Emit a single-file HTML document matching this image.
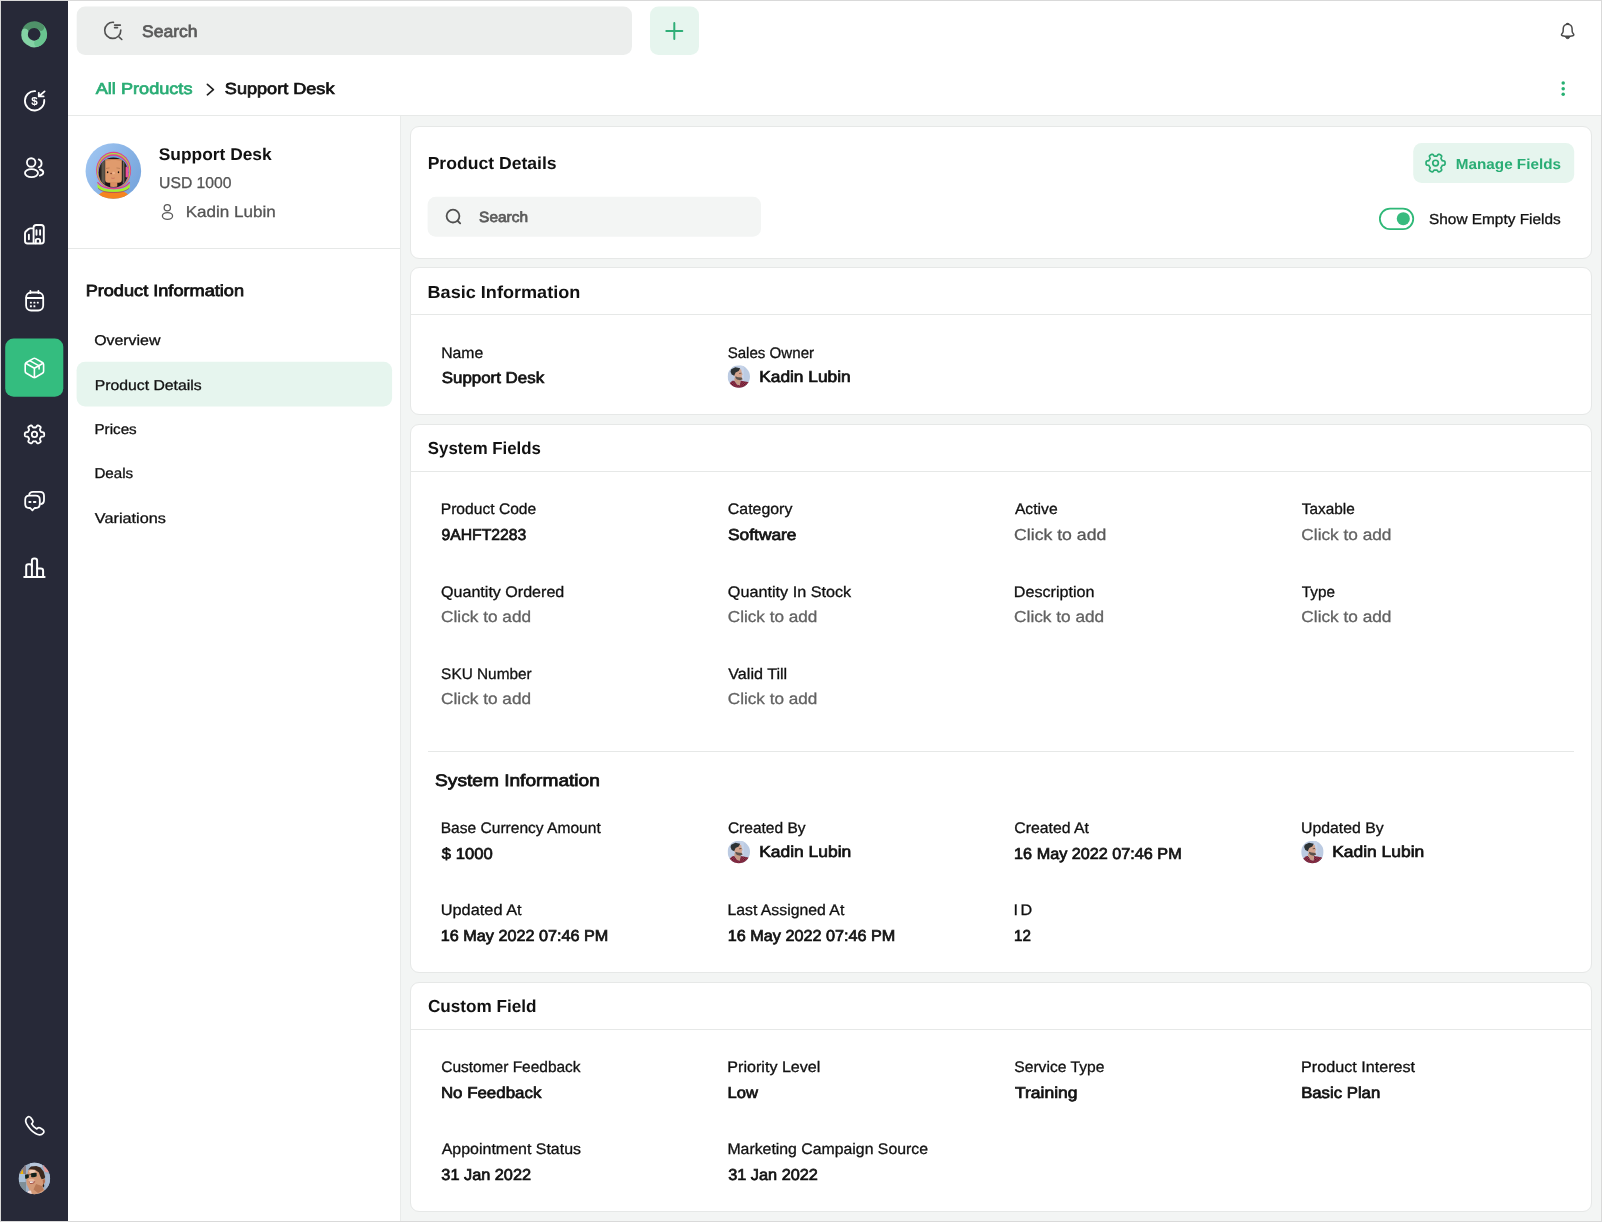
<!DOCTYPE html>
<html lang="en">
<head>
<meta charset="utf-8">
<title>Support Desk - Product Details</title>
<style>
*{box-sizing:border-box;margin:0;padding:0}
html,body{width:1602px;height:1222px;overflow:hidden;background:#fff}
body{position:relative;font-family:"Liberation Sans",Arial,sans-serif;color:#111}
#frame{position:absolute;left:0;top:0;width:1602px;height:1222px;border:1px solid #d9d9d9;z-index:50;pointer-events:none}
#side{position:absolute;left:1px;top:1px;width:67px;height:1220px;background:#272938}
#hdr{position:absolute;left:68px;top:1px;width:1533px;height:115px;background:#fff;border-bottom:1px solid #e7e9e8}
#left{position:absolute;left:68px;top:116px;width:333px;height:1105px;background:#fff;border-right:1px solid #e9ebea}
#ldiv{position:absolute;left:68px;top:248px;width:332px;height:1px;background:#e6e8e7}
#main{position:absolute;left:401px;top:116px;width:1200px;height:1105px;background:#f3f5f4}
.card{position:absolute;left:410px;width:1182px;background:#fff;border:1px solid #e6e8e7;border-radius:9px}
.hl{position:absolute;height:1px;background:#e6e8e7}
#txt,#ico{position:absolute;left:0;top:0;width:1602px;height:1222px;will-change:transform}
.t{position:absolute;left:0;top:0;white-space:nowrap;line-height:1;transform-origin:0 0;text-rendering:geometricPrecision}
svg{position:absolute;overflow:visible}
</style>
</head>
<body>
<div id="side"></div>
<div id="hdr"></div>
<div id="left"></div>
<div id="ldiv"></div>
<div id="main"></div>
<div class="card" style="top:126px;height:133px"></div>
<div class="card" style="top:267px;height:148px"></div>
<div class="hl" style="left:411px;top:314px;width:1180px"></div>
<div class="card" style="top:424px;height:549px"></div>
<div class="hl" style="left:411px;top:471px;width:1180px"></div>
<div class="hl" style="left:428px;top:751px;width:1146px"></div>
<div class="card" style="top:982px;height:230px"></div>
<div class="hl" style="left:411px;top:1029px;width:1180px"></div>
<svg style="left:0;top:0" width="1602" height="1222" viewBox="0 0 1602 1222">
<rect x="5.2" y="338.6" width="58.1" height="58.1" rx="8.5" fill="#34bd7f"/>
<rect x="76.7" y="6.6" width="555.3" height="48.5" rx="8.5" fill="#eceeed"/>
<rect x="650" y="6.6" width="49" height="48.5" rx="8.5" fill="#e6f5ee"/>
<rect x="76.6" y="361.8" width="315.5" height="44.7" rx="8.5" fill="#e6f5ee"/>
<rect x="427.6" y="196.8" width="333.4" height="39.9" rx="8" fill="#f3f5f4"/>
<rect x="1413.2" y="143" width="161" height="40" rx="8.5" fill="#e6f5ee"/>
</svg>
<div id="ico"><svg style="left:0;top:0" width="1602" height="1222" viewBox="0 0 1602 1222" fill="none" stroke-linecap="round" stroke-linejoin="round">
<g stroke-width="6.6" stroke-linecap="round">
<path d="M40.87,27.39 A9.6,9.6 0 0 1 41.55,40.47" stroke="#69c590"/>
<path d="M24.97,31.65 A9.6,9.6 0 0 1 40.87,27.39" stroke="#4f9269"/>
<path d="M39.00,42.61 A9.6,9.6 0 0 1 24.89,31.98" stroke="#84d3a5"/>
<path d="M43.22,37.58 A9.6,9.6 0 0 1 37.48,43.32" stroke="#69c590"/>
</g>
<g stroke="#fff" stroke-width="1.8">
<path d="M35.11,91.11 A9.7,9.7 0 1 0 44.26,99.95"/>
<path d="M44.6,91.4 L38.9,96.3 M38.8,92.8 L38.8,96.4 L43.6,96.4"/>
</g>
<text x="34.4" y="105.4" font-family="Liberation Sans, Arial, sans-serif" font-weight="700" font-size="11.6" fill="#fff" text-anchor="middle">$</text>
<g stroke="#fff" stroke-width="1.8">
<circle cx="31.2" cy="162.5" r="4.25"/>
<ellipse cx="31.5" cy="173.1" rx="6.55" ry="4"/>
<path d="M38.70,159.41 A4.2,4.2 0 0 1 38.70,167.39"/>
<path d="M39.9,169.5 C42,170 43.3,171.2 43.3,172.6 C43.3,174 42,175.2 39.9,175.7"/>
</g>
<g stroke="#fff" stroke-width="1.9">
<path d="M33.6,243.5 L33.6,227.6 Q33.6,225 36.2,225 L41.2,225 Q43.8,225 43.8,227.6 L43.8,241 Q43.8,243.5 41.2,243.5 L27.6,243.5 Q25,243.5 25,241 L25,233.6 Q25,232.2 26,231.3 L28.6,229 Q29.4,228.4 30.4,228.4 L33.6,228.4"/>
<path d="M28.9,234.6 L28.9,239.3 M36.5,230.2 L36.5,234.8 M40.1,230.2 L40.1,234.8"/>
<path d="M35.8,243.3 L35.8,240.6 Q35.8,238.9 37.5,238.9 L38.4,238.9 Q40.1,238.9 40.1,240.6 L40.1,243.3"/>
</g>
<g stroke="#fff" stroke-width="1.8">
<rect x="26.1" y="292.5" width="17.1" height="18" rx="5"/>
<path d="M26.3,298 L43,298 M30.4,291 L30.4,293 M38.4,291 L38.4,293"/>
</g>
<g fill="#fff" stroke="none">
<rect x="29.95" y="301.65" width="1.9" height="1.9" rx="0.5"/>
<rect x="33.45" y="301.65" width="1.9" height="1.9" rx="0.5"/>
<rect x="36.85" y="301.65" width="1.9" height="1.9" rx="0.5"/>
<rect x="29.95" y="305.25" width="1.9" height="1.9" rx="0.5"/>
<rect x="33.45" y="305.25" width="1.9" height="1.9" rx="0.5"/>
</g>
<g stroke="#fff" stroke-width="1.6">
<path d="M33.2,358.6 Q34.4,357.9 35.6,358.6 L42.4,362.5 Q43.6,363.2 43.6,364.6 L43.6,371.2 Q43.6,372.6 42.4,373.3 L35.6,377.2 Q34.4,377.9 33.2,377.2 L26.4,373.3 Q25.2,372.6 25.2,371.2 L25.2,364.6 Q25.2,363.2 26.4,362.5 Z"/>
<path d="M25.7,363.3 L34.4,368.2 L43.1,363.3 M34.4,368.2 L34.4,377.5 M29.7,360.6 L39.1,365.9 L39.1,368.9"/>
</g>
<g stroke="#fff" stroke-width="1.8">
<path d="M44.20,434.40 L44.20,434.65 L44.18,434.91 L44.16,435.16 L44.13,435.41 L44.08,435.66 L44.01,435.91 L43.87,436.14 L43.62,436.34 L43.17,436.48 L42.52,436.55 L41.87,436.58 L41.42,436.65 L41.16,436.76 L41.01,436.90 L40.91,437.05 L40.82,437.21 L40.73,437.37 L40.65,437.53 L40.56,437.69 L40.48,437.85 L40.38,438.01 L40.29,438.16 L40.19,438.31 L40.09,438.46 L40.00,438.62 L39.92,438.79 L39.87,438.99 L39.91,439.27 L40.07,439.69 L40.37,440.27 L40.64,440.87 L40.74,441.33 L40.69,441.65 L40.56,441.88 L40.38,442.07 L40.19,442.24 L39.99,442.39 L39.78,442.53 L39.57,442.67 L39.35,442.80 L39.13,442.92 L38.90,443.04 L38.67,443.15 L38.44,443.25 L38.20,443.33 L37.95,443.39 L37.68,443.39 L37.38,443.27 L37.03,442.95 L36.65,442.42 L36.29,441.87 L36.01,441.52 L35.79,441.35 L35.59,441.29 L35.40,441.27 L35.22,441.28 L35.04,441.29 L34.86,441.29 L34.68,441.30 L34.50,441.30 L34.32,441.30 L34.14,441.29 L33.96,441.29 L33.78,441.28 L33.60,441.27 L33.41,441.29 L33.21,441.35 L32.99,441.52 L32.71,441.87 L32.35,442.42 L31.97,442.95 L31.62,443.27 L31.32,443.39 L31.05,443.39 L30.80,443.33 L30.56,443.25 L30.33,443.15 L30.10,443.04 L29.87,442.92 L29.65,442.80 L29.43,442.67 L29.22,442.53 L29.01,442.39 L28.81,442.24 L28.62,442.07 L28.44,441.88 L28.31,441.65 L28.26,441.33 L28.36,440.87 L28.63,440.27 L28.93,439.69 L29.09,439.27 L29.13,438.99 L29.08,438.79 L29.00,438.62 L28.91,438.46 L28.81,438.31 L28.71,438.16 L28.62,438.01 L28.52,437.85 L28.44,437.69 L28.35,437.53 L28.27,437.37 L28.18,437.21 L28.09,437.05 L27.99,436.90 L27.84,436.76 L27.58,436.65 L27.13,436.58 L26.48,436.55 L25.83,436.48 L25.38,436.34 L25.13,436.14 L24.99,435.91 L24.92,435.66 L24.87,435.41 L24.84,435.16 L24.82,434.91 L24.80,434.65 L24.80,434.40 L24.80,434.15 L24.82,433.89 L24.84,433.64 L24.87,433.39 L24.92,433.14 L24.99,432.89 L25.13,432.66 L25.38,432.46 L25.83,432.32 L26.48,432.25 L27.13,432.22 L27.58,432.15 L27.84,432.04 L27.99,431.90 L28.09,431.75 L28.18,431.59 L28.27,431.43 L28.35,431.27 L28.44,431.11 L28.52,430.95 L28.62,430.79 L28.71,430.64 L28.81,430.49 L28.91,430.34 L29.00,430.18 L29.08,430.01 L29.13,429.81 L29.09,429.53 L28.93,429.11 L28.63,428.53 L28.36,427.93 L28.26,427.47 L28.31,427.15 L28.44,426.92 L28.62,426.73 L28.81,426.56 L29.01,426.41 L29.22,426.27 L29.43,426.13 L29.65,426.00 L29.87,425.88 L30.10,425.76 L30.33,425.65 L30.56,425.55 L30.80,425.47 L31.05,425.41 L31.32,425.41 L31.62,425.53 L31.97,425.85 L32.35,426.38 L32.71,426.93 L32.99,427.28 L33.21,427.45 L33.41,427.51 L33.60,427.53 L33.78,427.52 L33.96,427.51 L34.14,427.51 L34.32,427.50 L34.50,427.50 L34.68,427.50 L34.86,427.51 L35.04,427.51 L35.22,427.52 L35.40,427.53 L35.59,427.51 L35.79,427.45 L36.01,427.28 L36.29,426.93 L36.65,426.38 L37.03,425.85 L37.38,425.53 L37.68,425.41 L37.95,425.41 L38.20,425.47 L38.44,425.55 L38.67,425.65 L38.90,425.76 L39.13,425.88 L39.35,426.00 L39.57,426.13 L39.78,426.27 L39.99,426.41 L40.19,426.56 L40.38,426.73 L40.56,426.92 L40.69,427.15 L40.74,427.47 L40.64,427.93 L40.37,428.53 L40.07,429.11 L39.91,429.53 L39.87,429.81 L39.92,430.01 L40.00,430.18 L40.09,430.34 L40.19,430.49 L40.29,430.64 L40.38,430.79 L40.48,430.95 L40.56,431.11 L40.65,431.27 L40.73,431.43 L40.82,431.59 L40.91,431.75 L41.01,431.90 L41.16,432.04 L41.42,432.15 L41.87,432.22 L42.52,432.25 L43.17,432.32 L43.62,432.46 L43.87,432.66 L44.01,432.89 L44.08,433.14 L44.13,433.39 L44.16,433.64 L44.18,433.89 L44.20,434.15Z"/>
<circle cx="34.5" cy="434.4" r="2.7"/>
</g>
<g stroke="#fff" stroke-width="1.8">
<path d="M29.2,494.6 Q29.6,491.8 33,491.8 L40,491.8 Q44,491.8 44,495.8 L44,500.2 Q44,503.6 41,504.1"/>
<path d="M29.2,495.7 L35.8,495.7 Q39.8,495.7 39.8,499.7 L39.8,504 Q39.8,508 35.8,508 L34.6,508 L32.4,510.3 L30.2,508 L29.2,508 Q25.2,508 25.2,504 L25.2,499.7 Q25.2,495.7 29.2,495.7 Z"/>
<path d="M29.3,501.9 L30.5,501.9 M33.9,501.9 L35.4,501.9" stroke-width="2"/>
</g>
<g stroke="#fff" stroke-width="2">
<path d="M24.2,577 L44.6,577"/>
<path d="M26.2,576.5 L26.2,566.4 Q26.2,564.2 28.4,564.2 L29.7,564.2 Q31.9,564.2 31.9,566.4"/>
<path d="M31.9,576.5 L31.9,560.8 Q31.9,558.5 34.2,558.5 L34.8,558.5 Q37.1,558.5 37.1,560.8 L37.1,576.5"/>
<path d="M37.1,568.5 L40.9,568.5 Q43.1,568.5 43.1,570.7 L43.1,576.5"/>
</g>
<g stroke="#fff" stroke-width="1.7">
<path d="M27.6,1117.2 C28.6,1116.4 30,1116.6 30.8,1117.7 L32.6,1120.3 C33.2,1121.2 33.1,1122.3 32.4,1123 L31.6,1123.8 C32.8,1126 34.6,1127.8 36.8,1129 L37.6,1128.2 C38.3,1127.5 39.4,1127.4 40.3,1128 L42.9,1129.8 C44,1130.6 44.2,1132 43.4,1133 C41.6,1135.2 38.6,1135.4 35.6,1133.6 C31.6,1131.2 28.4,1127.4 26.4,1123.6 C25.2,1121.2 25.6,1118.8 27.6,1117.2 Z"/>
</g>
<defs><clipPath id="cpu"><circle cx="34.4" cy="1178.5" r="15.7"/></clipPath></defs>
<g clip-path="url(#cpu)" stroke="none"><g>
<rect x="17" y="1161" width="35" height="35" fill="#9db0c6"/>
<rect x="17" y="1161" width="9" height="14" fill="#8b7f86"/>
<rect x="19" y="1174" width="6" height="8" fill="#a9c0d6"/>
<rect x="18" y="1182" width="8" height="12" fill="#7f8f98"/>
<rect x="30" y="1161" width="12" height="6" fill="#b9c8dc"/>
<path d="M42.6,1165 L48.6,1166.5 L49.5,1172.5 L45,1172 Z" fill="#e89a98"/>
<rect x="45.5" y="1174" width="5" height="16" fill="#a8b8d0"/>
<path d="M20.2,1174 L22.6,1169.3 L23.3,1174 Z" fill="#f2b600"/>
<path d="M28.4,1170 L31,1168.6 L35,1169.4 L38.9,1172 L40.2,1176 L41.5,1179 L44.4,1178.2 L45.4,1181 L43.6,1185 L42.5,1186.6 L44.6,1190.6 L40,1195 L30.5,1195 L29,1189 L26.6,1184.2 L26.3,1180 L27,1175 Z" fill="#d49a78"/>
<ellipse cx="32.4" cy="1171.4" rx="3.2" ry="1.6" fill="#f0cdb8"/>
<ellipse cx="31.5" cy="1180.4" rx="3" ry="1.6" fill="#eab79c"/>
<path d="M36,1184 L42,1186 L43.5,1190 L38,1193 L33.5,1189.5 Z" fill="#b97a58"/>
<path d="M42.6,1180 L44.6,1179 L45,1182 L43.2,1184.6 Z" fill="#b06a4c"/>
<path d="M28.1,1169.6 L31,1166.6 L36.3,1166 L40.4,1167.6 L43.6,1171.6 L45.2,1177 L44.4,1178.6 L41.6,1179.2 L40.2,1176.3 L38.9,1172.4 L35,1169.8 L31,1169.2 Z" fill="#3b281e"/>
<path d="M43.4,1183.6 L44.4,1186 L43.2,1187.6 L42.6,1186 Z" fill="#2c1d16"/>
<path d="M25,1175.2 Q26.8,1173.8 28.8,1174.6 L28.9,1177.6 Q27,1179.4 25.2,1178.4 Z" fill="#17241d"/>
<path d="M31,1173.6 Q33.8,1172.2 36.6,1173 L36.7,1176.2 Q34,1178 31.2,1177 Z" fill="#15221c"/>
<path d="M28.8,1175 L31,1174.4" stroke="#2a2a2a" stroke-width="0.6"/>
<path d="M28.6,1181.4 Q32,1180.6 35.4,1181.6 Q33.6,1184.6 30.2,1184 Z" fill="#a8554a"/>
<path d="M29.4,1181.5 Q32,1181 34.2,1181.7 Q32.6,1183.2 30,1182.9 Z" fill="#f4efec"/>
<path d="M28,1191 L31,1190.6 L32,1195 L27,1195 Z" fill="#f1dcdc"/>
</g></g>
<g stroke="#505050" stroke-width="1.6">
<path d="M113.45,22.33 A8.05,8.05 0 1 0 120.80,30.07"/>
<path d="M119.2,37.2 L121.8,39.5 M114.6,25.15 L120.3,25.15 M114.6,27.65 L117.5,27.65"/>
</g>
<path d="M666.3,31 L682.3,31 M674.3,23 L674.3,39" stroke="#2fae77" stroke-width="2"/>
<g stroke="#4a4a4a" stroke-width="1.5">
<path d="M1567.64,24.2 C1564.9,24.2 1563.2,26.3 1563.2,28.8 C1563.2,30.5 1563.4,31.6 1562.6,32.8 L1561.7,34.2 C1561.2,35 1561.6,35.5 1562.4,35.7 C1565.8,36.5 1569.5,36.5 1572.9,35.7 C1573.7,35.5 1574.1,35 1573.6,34.2 L1572.7,32.8 C1571.9,31.6 1572.1,30.5 1572.1,28.8 C1572.1,26.3 1570.4,24.2 1567.64,24.2 Z"/>
<path d="M1566.5,23.7 Q1567.64,22.9 1568.8,23.7" stroke-width="1.3"/>
<path d="M1565.4,36.9 C1565.9,38.2 1566.7,38.7 1567.64,38.7 C1568.6,38.7 1569.4,38.2 1569.9,36.9 Z" fill="#4a4a4a" stroke-width="0.8"/>
</g>
<circle cx="1563.2" cy="83.1" r="1.75" fill="#27b072" stroke="none"/>
<circle cx="1563.2" cy="88.7" r="1.75" fill="#27b072" stroke="none"/>
<circle cx="1563.2" cy="94.3" r="1.75" fill="#27b072" stroke="none"/>
<path d="M207.4,84.4 L213.4,89.6 L207.4,94.8" stroke="#222" stroke-width="1.7"/>
<defs><clipPath id="cpa"><circle cx="113.35" cy="170.95" r="27.8"/></clipPath><linearGradient id="gb" x1="0" y1="0" x2="1" y2="0.6"><stop offset="0" stop-color="#a3c8f3"/><stop offset="1" stop-color="#78a6dd"/></linearGradient><clipPath id="cph"><ellipse cx="113.4" cy="172.4" rx="15.2" ry="14.6"/></clipPath></defs>
<g clip-path="url(#cpa)" stroke="none">
<rect x="85" y="143" width="57" height="57" fill="url(#gb)"/>
<path d="M96.5,200 C98,193 103,190 113.5,190 C124,190 129,193 130.5,200 Z" fill="#f5841f"/>
<ellipse cx="113.6" cy="170.6" rx="17.5" ry="18.9" fill="#e0428c"/>
<ellipse cx="113.6" cy="170.9" rx="16.7" ry="18" fill="#a8e63c"/>
<ellipse cx="113.6" cy="171.3" rx="15.9" ry="17.1" fill="#e53c8e"/>
<ellipse cx="113.5" cy="171.8" rx="15.2" ry="16.1" fill="#6d9fd6"/>
<ellipse cx="113.4" cy="172.5" rx="14.7" ry="15.1" fill="#1c1413"/>
<g clip-path="url(#cph)">
<rect x="100.2" y="160" width="5.4" height="26" fill="#2e2925"/>
<rect x="101.8" y="161" width="0.7" height="24" fill="#8d8573"/>
<rect x="103.6" y="160" width="0.7" height="25" fill="#a39a86"/>
<rect x="121.4" y="160" width="4.2" height="26" fill="#2e2925"/>
<rect x="123.4" y="161" width="0.8" height="24" fill="#9a917e"/>
<rect x="125.6" y="166.5" width="2.4" height="11" rx="1.2" fill="#f0509a"/>
<path d="M105.2,159 L121.8,159 L121.8,179.6 Q121.8,182.8 118.6,182.8 L108.4,182.8 Q105.2,182.8 105.2,179.6 Z" fill="#e09b6d"/>
<rect x="110.2" y="182" width="7.1" height="5" fill="#d88f62"/>
<path d="M105.2,159 L121.8,159 L121.8,161 C117,159.6 110,159.6 105.2,161 Z" fill="#c98255"/>
</g>
<ellipse cx="107.6" cy="172.3" rx="0.75" ry="1.05" fill="#120c0b"/><ellipse cx="118.5" cy="172.3" rx="0.75" ry="1.05" fill="#120c0b"/>
<path d="M106.4,168.4 L109.2,168 M116.9,168 L119.7,168.4" stroke="#9a6442" stroke-width="0.5"/>
<ellipse cx="111.1" cy="173.5" rx="1" ry="0.7" fill="#8a4a32"/>
<ellipse cx="113.6" cy="173" rx="1.4" ry="1.2" fill="#eeb08a"/>
<path d="M111.6,178.2 Q113,178.9 114.4,178.2" stroke="#c96a5a" stroke-width="0.7" fill="none"/>
<path d="M97.6,183.5 C101,188.6 107,189.6 113.5,189.6 C120,189.6 126,188.6 129.6,183.5 L129.8,187.4 C126,191.6 120,192 113.5,192 C107,192 101,191.6 97.4,187.4 Z" fill="#a6f02e"/>
<path d="M97.8,182.6 C101,187.4 107,188.4 113.5,188.4 C120,188.4 126,187.4 129.4,182.6" stroke="#e23c8e" stroke-width="1.2" fill="none"/>
<path d="M98.4,188.6 C102,191.8 107,192.4 113.5,192.4 C120,192.4 125,191.8 128.8,188.6" stroke="#8a2c86" stroke-width="0.6" fill="none"/>
</g>
<g stroke="#5a5a5a" stroke-width="1.3">
<circle cx="167.3" cy="207.8" r="3.15"/>
<ellipse cx="167.5" cy="216" rx="5.1" ry="3.35"/>
</g>
<g stroke="#505050" stroke-width="1.8">
<circle cx="453" cy="216.1" r="6.4"/><path d="M457.8,221 L460.2,223.4"/>
</g>
<rect x="1379.85" y="208.6" width="33.4" height="20.4" rx="10.2" fill="#fff" stroke="#2eb877" stroke-width="1.75"/>
<circle cx="1403.3" cy="218.7" r="6.55" fill="#37bb7e" stroke="none"/>
<g stroke="#2aad75" stroke-width="1.7">
<path d="M1445.06,163.06 L1445.06,163.31 L1445.04,163.56 L1445.03,163.80 L1444.99,164.05 L1444.95,164.30 L1444.88,164.54 L1444.75,164.76 L1444.53,164.97 L1444.12,165.11 L1443.53,165.20 L1442.94,165.25 L1442.54,165.33 L1442.30,165.45 L1442.16,165.59 L1442.05,165.75 L1441.97,165.91 L1441.88,166.08 L1441.80,166.24 L1441.71,166.40 L1441.62,166.56 L1441.53,166.72 L1441.43,166.87 L1441.33,167.03 L1441.23,167.18 L1441.14,167.34 L1441.05,167.51 L1441.00,167.70 L1441.01,167.97 L1441.15,168.36 L1441.39,168.89 L1441.62,169.44 L1441.69,169.87 L1441.63,170.17 L1441.50,170.39 L1441.33,170.57 L1441.14,170.73 L1440.94,170.88 L1440.73,171.03 L1440.52,171.16 L1440.31,171.29 L1440.09,171.41 L1439.87,171.52 L1439.65,171.63 L1439.42,171.73 L1439.18,171.81 L1438.94,171.87 L1438.68,171.88 L1438.39,171.78 L1438.06,171.50 L1437.70,171.03 L1437.36,170.55 L1437.08,170.23 L1436.86,170.09 L1436.67,170.04 L1436.48,170.03 L1436.29,170.03 L1436.11,170.04 L1435.93,170.05 L1435.74,170.06 L1435.56,170.06 L1435.38,170.06 L1435.19,170.05 L1435.01,170.04 L1434.83,170.03 L1434.64,170.03 L1434.45,170.04 L1434.26,170.09 L1434.04,170.23 L1433.76,170.55 L1433.42,171.03 L1433.06,171.50 L1432.73,171.78 L1432.44,171.88 L1432.18,171.87 L1431.94,171.81 L1431.70,171.73 L1431.47,171.63 L1431.25,171.52 L1431.03,171.41 L1430.81,171.29 L1430.60,171.16 L1430.39,171.03 L1430.18,170.88 L1429.98,170.73 L1429.79,170.57 L1429.62,170.39 L1429.49,170.17 L1429.43,169.87 L1429.50,169.44 L1429.73,168.89 L1429.97,168.36 L1430.11,167.97 L1430.12,167.70 L1430.07,167.51 L1429.98,167.34 L1429.89,167.18 L1429.79,167.03 L1429.69,166.87 L1429.59,166.72 L1429.50,166.56 L1429.41,166.40 L1429.32,166.24 L1429.24,166.08 L1429.15,165.91 L1429.07,165.75 L1428.96,165.59 L1428.82,165.45 L1428.58,165.33 L1428.18,165.25 L1427.59,165.20 L1427.00,165.11 L1426.59,164.97 L1426.37,164.76 L1426.24,164.54 L1426.17,164.30 L1426.13,164.05 L1426.09,163.80 L1426.08,163.56 L1426.06,163.31 L1426.06,163.06 L1426.06,162.81 L1426.08,162.56 L1426.09,162.32 L1426.13,162.07 L1426.17,161.82 L1426.24,161.58 L1426.37,161.36 L1426.59,161.15 L1427.00,161.01 L1427.59,160.92 L1428.18,160.87 L1428.58,160.79 L1428.82,160.67 L1428.96,160.53 L1429.07,160.37 L1429.15,160.21 L1429.24,160.04 L1429.32,159.88 L1429.41,159.72 L1429.50,159.56 L1429.59,159.40 L1429.69,159.25 L1429.79,159.09 L1429.89,158.94 L1429.98,158.78 L1430.07,158.61 L1430.12,158.42 L1430.11,158.15 L1429.97,157.76 L1429.73,157.23 L1429.50,156.68 L1429.43,156.25 L1429.49,155.95 L1429.62,155.73 L1429.79,155.55 L1429.98,155.39 L1430.18,155.24 L1430.39,155.09 L1430.60,154.96 L1430.81,154.83 L1431.03,154.71 L1431.25,154.60 L1431.47,154.49 L1431.70,154.39 L1431.94,154.31 L1432.18,154.25 L1432.44,154.24 L1432.73,154.34 L1433.06,154.62 L1433.42,155.09 L1433.76,155.57 L1434.04,155.89 L1434.26,156.03 L1434.45,156.08 L1434.64,156.09 L1434.83,156.09 L1435.01,156.08 L1435.19,156.07 L1435.38,156.06 L1435.56,156.06 L1435.74,156.06 L1435.93,156.07 L1436.11,156.08 L1436.29,156.09 L1436.48,156.09 L1436.67,156.08 L1436.86,156.03 L1437.08,155.89 L1437.36,155.57 L1437.70,155.09 L1438.06,154.62 L1438.39,154.34 L1438.68,154.24 L1438.94,154.25 L1439.18,154.31 L1439.42,154.39 L1439.65,154.49 L1439.87,154.60 L1440.09,154.71 L1440.31,154.83 L1440.52,154.96 L1440.73,155.09 L1440.94,155.24 L1441.14,155.39 L1441.33,155.55 L1441.50,155.73 L1441.63,155.95 L1441.69,156.25 L1441.62,156.68 L1441.39,157.23 L1441.15,157.76 L1441.01,158.15 L1441.00,158.42 L1441.05,158.61 L1441.14,158.78 L1441.23,158.94 L1441.33,159.09 L1441.43,159.25 L1441.53,159.40 L1441.62,159.56 L1441.71,159.72 L1441.80,159.88 L1441.88,160.04 L1441.97,160.21 L1442.05,160.37 L1442.16,160.53 L1442.30,160.67 L1442.54,160.79 L1442.94,160.87 L1443.53,160.92 L1444.12,161.01 L1444.53,161.15 L1444.75,161.36 L1444.88,161.58 L1444.95,161.82 L1444.99,162.07 L1445.03,162.32 L1445.04,162.56 L1445.06,162.81Z"/>
<circle cx="1435.56" cy="163.06" r="2.8"/>
</g>
<defs><pattern id="plaid" width="2.4" height="2.4" patternUnits="userSpaceOnUse"><rect width="2.4" height="2.4" fill="#c9303d"/><rect width="1.2" height="1.2" fill="#2b2340"/><rect x="1.2" y="1.2" width="1.2" height="1.2" fill="#3a2446"/></pattern></defs>
<defs><clipPath id="cs1"><circle cx="738.8" cy="376.55" r="11.2"/></clipPath></defs>
<g clip-path="url(#cs1)" stroke="none">
<rect x="727.5999999999999" y="365.35" width="22.4" height="22.4" fill="#bccbe2"/>
<rect x="739.8" y="365.35" width="4" height="22.4" fill="#c6d3e8"/>
<path d="M729.30,383.55 L732.30,380.85 L734.40,380.65 L737.30,384.55 L739.80,385.15 L740.50,380.55 L743.80,381.15 L749.30,382.35 L749.30,388.55 L728.80,388.55Z" fill="url(#plaid)"/>
<path d="M734.60,377.55 L740.30,379.55 L740.50,380.55 L739.80,385.15 L737.30,384.55 L734.40,380.65Z" fill="#c79a85"/>
<path d="M738.50,368.95 L741.20,369.45 L741.70,372.55 L742.70,374.45 L741.70,375.35 L741.80,376.75 L742.60,379.15 L740.10,380.15 L735.90,377.95 L733.90,375.55 L735.40,372.35Z" fill="#d3a58f"/>
<path d="M735.50,376.35 L737.80,377.15 L741.50,377.45 L742.60,379.15 L740.10,380.25 L737.00,379.45 L735.40,377.75Z" fill="#5a514c"/>
<path d="M739.00,372.95 L741.40,372.65 L741.40,373.45 L739.20,373.75Z" fill="#5c4a44"/>
<path d="M731.20,369.35 L735.40,367.25 L740.20,368.25 L738.70,370.95 L735.60,372.55 L734.20,375.75 L731.70,374.45 L730.50,371.65Z" fill="#2d3335"/>
</g>
<defs><clipPath id="cs2"><circle cx="738.8" cy="852.0" r="11.2"/></clipPath></defs>
<g clip-path="url(#cs2)" stroke="none">
<rect x="727.5999999999999" y="840.8" width="22.4" height="22.4" fill="#bccbe2"/>
<rect x="739.8" y="840.8" width="4" height="22.4" fill="#c6d3e8"/>
<path d="M729.30,859.00 L732.30,856.30 L734.40,856.10 L737.30,860.00 L739.80,860.60 L740.50,856.00 L743.80,856.60 L749.30,857.80 L749.30,864.00 L728.80,864.00Z" fill="url(#plaid)"/>
<path d="M734.60,853.00 L740.30,855.00 L740.50,856.00 L739.80,860.60 L737.30,860.00 L734.40,856.10Z" fill="#c79a85"/>
<path d="M738.50,844.40 L741.20,844.90 L741.70,848.00 L742.70,849.90 L741.70,850.80 L741.80,852.20 L742.60,854.60 L740.10,855.60 L735.90,853.40 L733.90,851.00 L735.40,847.80Z" fill="#d3a58f"/>
<path d="M735.50,851.80 L737.80,852.60 L741.50,852.90 L742.60,854.60 L740.10,855.70 L737.00,854.90 L735.40,853.20Z" fill="#5a514c"/>
<path d="M739.00,848.40 L741.40,848.10 L741.40,848.90 L739.20,849.20Z" fill="#5c4a44"/>
<path d="M731.20,844.80 L735.40,842.70 L740.20,843.70 L738.70,846.40 L735.60,848.00 L734.20,851.20 L731.70,849.90 L730.50,847.10Z" fill="#2d3335"/>
</g>
<defs><clipPath id="cs3"><circle cx="1312.4" cy="852" r="11.2"/></clipPath></defs>
<g clip-path="url(#cs3)" stroke="none">
<rect x="1301.2" y="840.8" width="22.4" height="22.4" fill="#bccbe2"/>
<rect x="1313.4" y="840.8" width="4" height="22.4" fill="#c6d3e8"/>
<path d="M1302.90,859.00 L1305.90,856.30 L1308.00,856.10 L1310.90,860.00 L1313.40,860.60 L1314.10,856.00 L1317.40,856.60 L1322.90,857.80 L1322.90,864.00 L1302.40,864.00Z" fill="url(#plaid)"/>
<path d="M1308.20,853.00 L1313.90,855.00 L1314.10,856.00 L1313.40,860.60 L1310.90,860.00 L1308.00,856.10Z" fill="#c79a85"/>
<path d="M1312.10,844.40 L1314.80,844.90 L1315.30,848.00 L1316.30,849.90 L1315.30,850.80 L1315.40,852.20 L1316.20,854.60 L1313.70,855.60 L1309.50,853.40 L1307.50,851.00 L1309.00,847.80Z" fill="#d3a58f"/>
<path d="M1309.10,851.80 L1311.40,852.60 L1315.10,852.90 L1316.20,854.60 L1313.70,855.70 L1310.60,854.90 L1309.00,853.20Z" fill="#5a514c"/>
<path d="M1312.60,848.40 L1315.00,848.10 L1315.00,848.90 L1312.80,849.20Z" fill="#5c4a44"/>
<path d="M1304.80,844.80 L1309.00,842.70 L1313.80,843.70 L1312.30,846.40 L1309.20,848.00 L1307.80,851.20 L1305.30,849.90 L1304.10,847.10Z" fill="#2d3335"/>
</g>
</svg></div>
<div id="txt"><span class="t" style="font-size:16.8px;color:#5a5a5a;font-weight:400;-webkit-text-stroke:0.7px;transform:translate(141.99px,24px) scaleX(1.0449)">Search</span>
<span class="t" style="font-size:16.0px;color:#2aad75;font-weight:400;-webkit-text-stroke:0.7px;transform:translate(95.72px,82px) scaleX(1.1333)">All Products</span>
<span class="t" style="font-size:16.0px;color:#111;font-weight:400;-webkit-text-stroke:0.7px;transform:translate(224.85px,82px) scaleX(1.1303)">Support Desk</span>
<span class="t" style="font-size:17.0px;color:#111;font-weight:700;transform:translate(158.75px,146px) scaleX(1.0220)">Support Desk</span>
<span class="t" style="font-size:15.6px;color:#555;font-weight:400;-webkit-text-stroke:0.3px;transform:translate(159.05px,176px) scaleX(1.0082)">USD 1000</span>
<span class="t" style="font-size:15.6px;color:#555;font-weight:400;-webkit-text-stroke:0.3px;transform:translate(185.67px,205px) scaleX(1.0933)">Kadin Lubin</span>
<span class="t" style="font-size:16.0px;color:#111;font-weight:400;-webkit-text-stroke:0.75px;transform:translate(85.64px,284px) scaleX(1.1340)">Product Information</span>
<span class="t" style="font-size:14.2px;color:#111;font-weight:400;-webkit-text-stroke:0.3px;transform:translate(94.16px,334px) scaleX(1.1208)">Overview</span>
<span class="t" style="font-size:14.2px;color:#111;font-weight:400;-webkit-text-stroke:0.3px;transform:translate(94.68px,379px) scaleX(1.1116)">Product Details</span>
<span class="t" style="font-size:14.2px;color:#111;font-weight:400;-webkit-text-stroke:0.3px;transform:translate(94.44px,423px) scaleX(1.0717)">Prices</span>
<span class="t" style="font-size:14.2px;color:#111;font-weight:400;-webkit-text-stroke:0.3px;transform:translate(94.45px,467px) scaleX(1.0662)">Deals</span>
<span class="t" style="font-size:14.2px;color:#111;font-weight:400;-webkit-text-stroke:0.3px;transform:translate(94.86px,512px) scaleX(1.1435)">Variations</span>
<span class="t" style="font-size:17.4px;color:#111;font-weight:700;transform:translate(427.63px,155px) scaleX(1.0113)">Product Details</span>
<span class="t" style="font-size:14.8px;color:#5a5a5a;font-weight:400;-webkit-text-stroke:0.7px;transform:translate(479.10px,211px) scaleX(1.0427)">Search</span>
<span class="t" style="font-size:14.6px;color:#2aad75;font-weight:700;transform:translate(1455.78px,158px) scaleX(1.0463)">Manage Fields</span>
<span class="t" style="font-size:14.5px;color:#111;font-weight:400;-webkit-text-stroke:0.3px;transform:translate(1429.00px,213px) scaleX(1.0616)">Show Empty Fields</span>
<span class="t" style="font-size:17.4px;color:#111;font-weight:700;transform:translate(427.56px,284px) scaleX(1.0397)">Basic Information</span>
<span class="t" style="font-size:15.3px;color:#111;font-weight:400;-webkit-text-stroke:0.3px;transform:translate(441.15px,346px) scaleX(1.0315)">Name</span>
<span class="t" style="font-size:15.8px;color:#111;font-weight:400;-webkit-text-stroke:0.7px;transform:translate(441.80px,371px) scaleX(1.0687)">Support Desk</span>
<span class="t" style="font-size:15.3px;color:#111;font-weight:400;-webkit-text-stroke:0.3px;transform:translate(727.63px,346px) scaleX(0.9870)">Sales Owner</span>
<span class="t" style="font-size:15.8px;color:#111;font-weight:400;-webkit-text-stroke:0.7px;transform:translate(759.19px,370px) scaleX(1.0969)">Kadin Lubin</span>
<span class="t" style="font-size:17.4px;color:#111;font-weight:700;transform:translate(427.83px,440px) scaleX(0.9664)">System Fields</span>
<span class="t" style="font-size:15.3px;color:#111;font-weight:400;-webkit-text-stroke:0.3px;transform:translate(440.73px,502px) scaleX(1.0212)">Product Code</span>
<span class="t" style="font-size:15.3px;color:#111;font-weight:400;-webkit-text-stroke:0.3px;transform:translate(727.85px,502px) scaleX(1.0394)">Category</span>
<span class="t" style="font-size:15.3px;color:#111;font-weight:400;-webkit-text-stroke:0.3px;transform:translate(1014.89px,502px) scaleX(1.0257)">Active</span>
<span class="t" style="font-size:15.3px;color:#111;font-weight:400;-webkit-text-stroke:0.3px;transform:translate(1301.79px,502px) scaleX(1.0041)">Taxable</span>
<span class="t" style="font-size:15.8px;color:#111;font-weight:400;-webkit-text-stroke:0.7px;transform:translate(441.45px,528px) scaleX(0.9953)">9AHFT2283</span>
<span class="t" style="font-size:15.8px;color:#111;font-weight:400;-webkit-text-stroke:0.7px;transform:translate(728.02px,528px) scaleX(1.0986)">Software</span>
<span class="t" style="font-size:15.8px;color:#585858;font-weight:400;-webkit-text-stroke:0.3px;transform:translate(1014.09px,528px) scaleX(1.1170)">Click to add</span>
<span class="t" style="font-size:15.8px;color:#626262;font-weight:400;-webkit-text-stroke:0.3px;transform:translate(1301.36px,528px) scaleX(1.0907)">Click to add</span>
<span class="t" style="font-size:15.3px;color:#111;font-weight:400;-webkit-text-stroke:0.3px;transform:translate(441.07px,585px) scaleX(1.0499)">Quantity Ordered</span>
<span class="t" style="font-size:15.3px;color:#111;font-weight:400;-webkit-text-stroke:0.3px;transform:translate(727.80px,585px) scaleX(1.0596)">Quantity In Stock</span>
<span class="t" style="font-size:15.3px;color:#111;font-weight:400;-webkit-text-stroke:0.3px;transform:translate(1013.78px,585px) scaleX(1.0547)">Description</span>
<span class="t" style="font-size:15.3px;color:#111;font-weight:400;-webkit-text-stroke:0.3px;transform:translate(1301.79px,585px) scaleX(0.9974)">Type</span>
<span class="t" style="font-size:15.8px;color:#626262;font-weight:400;-webkit-text-stroke:0.3px;transform:translate(441.10px,610px) scaleX(1.0899)">Click to add</span>
<span class="t" style="font-size:15.8px;color:#626262;font-weight:400;-webkit-text-stroke:0.3px;transform:translate(727.80px,610px) scaleX(1.0851)">Click to add</span>
<span class="t" style="font-size:15.8px;color:#626262;font-weight:400;-webkit-text-stroke:0.3px;transform:translate(1014.10px,610px) scaleX(1.0916)">Click to add</span>
<span class="t" style="font-size:15.8px;color:#626262;font-weight:400;-webkit-text-stroke:0.3px;transform:translate(1301.36px,610px) scaleX(1.0907)">Click to add</span>
<span class="t" style="font-size:15.3px;color:#111;font-weight:400;-webkit-text-stroke:0.3px;transform:translate(441.12px,667px) scaleX(1.0053)">SKU Number</span>
<span class="t" style="font-size:15.3px;color:#111;font-weight:400;-webkit-text-stroke:0.3px;transform:translate(728.26px,667px) scaleX(1.0554)">Valid Till</span>
<span class="t" style="font-size:15.8px;color:#626262;font-weight:400;-webkit-text-stroke:0.3px;transform:translate(441.10px,692px) scaleX(1.0899)">Click to add</span>
<span class="t" style="font-size:15.8px;color:#626262;font-weight:400;-webkit-text-stroke:0.3px;transform:translate(727.80px,692px) scaleX(1.0851)">Click to add</span>
<span class="t" style="font-size:16.7px;color:#111;font-weight:400;-webkit-text-stroke:0.75px;transform:translate(435.05px,773px) scaleX(1.1467)">System Information</span>
<span class="t" style="font-size:15.3px;color:#111;font-weight:400;-webkit-text-stroke:0.3px;transform:translate(440.72px,821px) scaleX(1.0171)">Base Currency Amount</span>
<span class="t" style="font-size:15.3px;color:#111;font-weight:400;-webkit-text-stroke:0.3px;transform:translate(727.88px,821px) scaleX(1.0142)">Created By</span>
<span class="t" style="font-size:15.3px;color:#111;font-weight:400;-webkit-text-stroke:0.3px;transform:translate(1014.19px,821px) scaleX(1.0352)">Created At</span>
<span class="t" style="font-size:15.3px;color:#111;font-weight:400;-webkit-text-stroke:0.3px;transform:translate(1301.04px,821px) scaleX(1.0345)">Updated By</span>
<span class="t" style="font-size:15.8px;color:#111;font-weight:400;-webkit-text-stroke:0.7px;transform:translate(441.86px,847px) scaleX(1.0505)">$ 1000</span>
<span class="t" style="font-size:15.8px;color:#111;font-weight:400;-webkit-text-stroke:0.7px;transform:translate(759.19px,845px) scaleX(1.1027)">Kadin Lubin</span>
<span class="t" style="font-size:15.8px;color:#111;font-weight:400;-webkit-text-stroke:0.7px;transform:translate(1014.11px,847px) scaleX(1.0256)">16 May 2022 07:46 PM</span>
<span class="t" style="font-size:15.8px;color:#111;font-weight:400;-webkit-text-stroke:0.7px;transform:translate(1332.26px,845px) scaleX(1.1016)">Kadin Lubin</span>
<span class="t" style="font-size:15.3px;color:#111;font-weight:400;-webkit-text-stroke:0.3px;transform:translate(440.69px,903px) scaleX(1.0686)">Updated At</span>
<span class="t" style="font-size:15.3px;color:#111;font-weight:400;-webkit-text-stroke:0.3px;transform:translate(727.43px,903px) scaleX(1.0332)">Last Assigned At</span>
<span class="t" style="font-size:15.3px;color:#111;font-weight:400;-webkit-text-stroke:0.3px;transform:translate(1013.56px,903px) scaleX(1.0572);letter-spacing:2.4px">ID</span>
<span class="t" style="font-size:15.8px;color:#111;font-weight:400;-webkit-text-stroke:0.7px;transform:translate(440.85px,929px) scaleX(1.0253)">16 May 2022 07:46 PM</span>
<span class="t" style="font-size:15.8px;color:#111;font-weight:400;-webkit-text-stroke:0.7px;transform:translate(727.79px,929px) scaleX(1.0250)">16 May 2022 07:46 PM</span>
<span class="t" style="font-size:15.8px;color:#111;font-weight:400;-webkit-text-stroke:0.7px;transform:translate(1014.11px,929px) scaleX(0.9589)">12</span>
<span class="t" style="font-size:17.4px;color:#111;font-weight:700;transform:translate(427.97px,998px) scaleX(0.9860)">Custom Field</span>
<span class="t" style="font-size:15.3px;color:#111;font-weight:400;-webkit-text-stroke:0.3px;transform:translate(441.26px,1060px) scaleX(1.0115)">Customer Feedback</span>
<span class="t" style="font-size:15.3px;color:#111;font-weight:400;-webkit-text-stroke:0.3px;transform:translate(727.36px,1060px) scaleX(1.0521)">Priority Level</span>
<span class="t" style="font-size:15.3px;color:#111;font-weight:400;-webkit-text-stroke:0.3px;transform:translate(1014.28px,1060px) scaleX(1.0218)">Service Type</span>
<span class="t" style="font-size:15.3px;color:#111;font-weight:400;-webkit-text-stroke:0.3px;transform:translate(1301.00px,1060px) scaleX(1.0565)">Product Interest</span>
<span class="t" style="font-size:15.8px;color:#111;font-weight:400;-webkit-text-stroke:0.7px;transform:translate(440.88px,1086px) scaleX(1.0692)">No Feedback</span>
<span class="t" style="font-size:15.8px;color:#111;font-weight:400;-webkit-text-stroke:0.7px;transform:translate(727.54px,1086px) scaleX(1.0485)">Low</span>
<span class="t" style="font-size:15.8px;color:#111;font-weight:400;-webkit-text-stroke:0.7px;transform:translate(1014.97px,1086px) scaleX(1.1065)">Training</span>
<span class="t" style="font-size:15.8px;color:#111;font-weight:400;-webkit-text-stroke:0.7px;transform:translate(1301.13px,1086px) scaleX(1.0601)">Basic Plan</span>
<span class="t" style="font-size:15.3px;color:#111;font-weight:400;-webkit-text-stroke:0.3px;transform:translate(441.73px,1142px) scaleX(1.0431)">Appointment Status</span>
<span class="t" style="font-size:15.3px;color:#111;font-weight:400;-webkit-text-stroke:0.3px;transform:translate(727.43px,1142px) scaleX(1.0347)">Marketing Campaign Source</span>
<span class="t" style="font-size:15.8px;color:#111;font-weight:400;-webkit-text-stroke:0.7px;transform:translate(441.35px,1168px) scaleX(1.0308)">31 Jan 2022</span>
<span class="t" style="font-size:15.8px;color:#111;font-weight:400;-webkit-text-stroke:0.7px;transform:translate(728.23px,1168px) scaleX(1.0305)">31 Jan 2022</span></div>
<div id="frame"></div>
</body>
</html>
